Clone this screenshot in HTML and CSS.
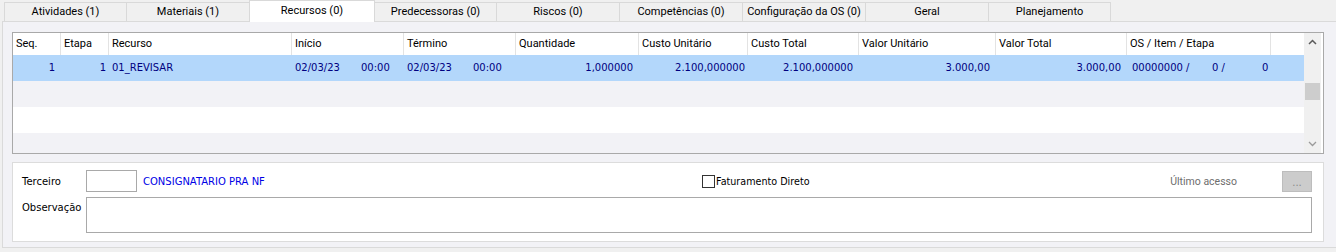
FILE: index.html
```html
<!DOCTYPE html>
<html lang="pt-BR">
<head>
<meta charset="utf-8">
<title>Recursos</title>
<link rel="stylesheet" href="styles.css">
</head>
<body>
<div class="window">
  <div class="tabs">
    <div class="tab w122">Atividades (1)</div>
    <div class="tab w123">Materiais (1)</div>
    <div class="tab active w126">Recursos (0)</div>
    <div class="tab w122">Predecessoras (0)</div>
    <div class="tab w123">Riscos (0)</div>
    <div class="tab w123">Competências (0)</div>
    <div class="tab w123">Configuração da OS (0)</div>
    <div class="tab w123">Geral</div>
    <div class="tab w122 last">Planejamento</div>
  </div>
  <div class="panel">
    <div class="grid">
      <div class="table">
        <div class="row head">
          <div class="c">Seq.</div>
          <div class="c">Etapa</div>
          <div class="c">Recurso</div>
          <div class="c">Início</div>
          <div class="c">Término</div>
          <div class="c">Quantidade</div>
          <div class="c">Custo Unitário</div>
          <div class="c">Custo Total</div>
          <div class="c">Valor Unitário</div>
          <div class="c">Valor Total</div>
          <div class="c">OS / Item / Etapa</div>
          <div class="c blank"></div>
        </div>
        <div class="row data sel">
          <div class="c r p6">1</div>
          <div class="c r p3">1</div>
          <div class="c">01_REVISAR</div>
          <div class="c dt"><span>02/03/23</span><span>00:00</span></div>
          <div class="c dt"><span>02/03/23</span><span>00:00</span></div>
          <div class="c r p6">1,000000</div>
          <div class="c r p3">2.100,000000</div>
          <div class="c r p6">2.100,000000</div>
          <div class="c r p6">3.000,00</div>
          <div class="c r p6">3.000,00</div>
          <div class="c os"><span class="os1">00000000 /</span><span class="os2">0 /</span><span class="os3">0</span></div>
          <div class="c blank"></div>
        </div>
        <div class="row data alt"></div>
        <div class="row data"></div>
        <div class="row data alt"></div>
      </div>
      <div class="vscroll">
        <svg class="arrow" width="9" height="6" viewBox="0 0 9 6"><path d="M1 5 L4.5 1.5 L8 5" fill="none" stroke="#5a5a5a" stroke-width="1.5"/></svg>
        <div class="track"><div class="thumb"></div></div>
        <svg class="arrow" width="9" height="6" viewBox="0 0 9 6"><path d="M1 1 L4.5 4.5 L8 1" fill="none" stroke="#9a9a9a" stroke-width="1.3"/></svg>
      </div>
    </div>
    <div class="group">
      <div class="frow">
        <label class="lbl">Terceiro</label>
        <div class="input small"></div>
        <div class="terc">CONSIGNATARIO PRA NF</div>
        <div class="check"><span class="box"></span><span>Faturamento Direto</span></div>
        <div class="spacer"></div>
        <div class="ultimo">Último acesso</div>
        <div class="btn">...</div>
      </div>
      <div class="frow obs">
        <label class="lbl">Observação</label>
        <div class="input area"></div>
      </div>
    </div>
  </div>
</div>
</body>
</html>
```

FILE: styles.css
```css
html, body {
  margin: 0;
  padding: 0;
  background: #f0f0f0;
}
.window {
  width: 1336px;
  height: 252px;
  font-family: Roboto, "Liberation Sans", sans-serif;
  font-size: 11px;
  color: #000;
}
.tabs {
  display: flex;
  align-items: flex-end;
  height: 21px;
  padding-left: 4px;
  position: relative;
  z-index: 2;
}
.tab {
  height: 18px;
  line-height: 18px;
  text-align: center;
  border: 1px solid #d9d9d9;
  border-bottom: none;
  background: #f0f0f0;
  margin-right: -1px;
  box-sizing: content-box;
}
.tab.active {
  height: 21px;
  line-height: 19px;
  background: #ffffff;
  border-color: #d9d9d9;
  margin-bottom: -1px;
  position: relative;
  z-index: 3;
}
.w122 { width: 121px; }
.w123 { width: 122px; }
.w126 { width: 124px; }

.panel {
  margin-left: 2px;
  width: 1328px;
  border: 1px solid #dadada;
  background: #f2f2f6;
  padding: 10px 0 5px 9px;
  position: relative;
  z-index: 1;
}
.grid {
  width: 1310px;
  height: 120px;
  border: 1px solid #a9a9a9;
  background: #ffffff;
  display: flex;
}
.table {
  width: 1291px;
  overflow: hidden;
}
.row {
  display: grid;
  grid-template-columns: 48px 48px 183px 112px 112px 123px 109px 111px 137px 131px 144px 33px;
}
.row.head {
  height: 22px;
  background: #fff;
}
.row.head .c {
  border-right: 1px solid #e3e3e3;
  padding-left: 3px;
  line-height: 22px;
  white-space: nowrap;
}
.row.head .c.blank { border-right: none; }
.row.data {
  height: 26px;
  font-family: "DejaVu Sans", Verdana, sans-serif;
  font-size: 10px;
  color: #000080;
}
.row.data .c {
  line-height: 26px;
  padding-left: 3px;
  white-space: nowrap;
}
.row.data .c.r { text-align: right; padding-left: 0; }
.row.data .c.p6 { padding-right: 6px; }
.row.data .c.p3 { padding-right: 3px; }
.row.sel { background: #b3d7fb; }
.row.alt { background: #f2f2f6; }
.c { box-sizing: border-box; overflow: hidden; }
.dt { display: flex; }
.dt span:first-child { width: 66px; }
.row.data .c.os { display: flex; padding-left: 5px; }
.os1 { width: 80px; flex: none; }
.os2 { width: 50px; flex: none; }
.os3 { flex: none; }

.vscroll {
  width: 17px;
  background: #f0f0f0;
  display: flex;
  flex-direction: column;
  align-items: center;
  padding: 6px 0 6px 0;
  box-sizing: border-box;
}
.vscroll .arrow { flex: none; }
.track {
  flex: 1;
  width: 100%;
  position: relative;
}
.thumb {
  margin-top: 38px;
  margin-left: 1px;
  width: 15px;
  height: 17px;
  background: #cdcdcd;
}

.group {
  margin-top: 8px;
  width: 1290px;
  background: #ffffff;
  border: 1px solid #dcdcdc;
  padding: 7px 11px 8px 9px;
  font-family: "DejaVu Sans", Verdana, sans-serif;
  font-size: 10px;
}
.frow {
  display: flex;
  align-items: center;
  height: 22px;
}
.frow.obs {
  margin-top: 5px;
  height: 36px;
  align-items: flex-start;
}
.lbl {
  width: 64px;
  flex: none;
  color: #000;
}
.obs .lbl { padding-top: 5px; }
.input {
  border: 1px solid #a9a9a9;
  background: #fff;
  box-sizing: border-box;
}
.input.small { width: 51px; height: 22px; }
.input.area { flex: 1; height: 36px; }
.terc {
  width: 565px;
  padding-left: 6px;
  box-sizing: border-box;
  color: #0000e6;
  flex: none;
}
.check {
  display: flex;
  align-items: center;
  font-size: 9.6px;
}
.box {
  width: 13px;
  height: 13px;
  border: 1px solid #333;
  box-sizing: border-box;
  margin-right: 1px;
  background: #fff;
}
.spacer { flex: 1; }
.ultimo {
  font-family: Roboto, "Liberation Sans", sans-serif;
  font-size: 10.5px;
  color: #6d6d6d;
  margin-right: 45px;
}
.btn {
  width: 30px;
  height: 21px;
  box-sizing: border-box;
  background: #cccccc;
  border: 1px solid #bdbdbd;
  color: #8a8a8a;
  text-align: center;
  line-height: 22px;
  font-size: 10px;
}
```
